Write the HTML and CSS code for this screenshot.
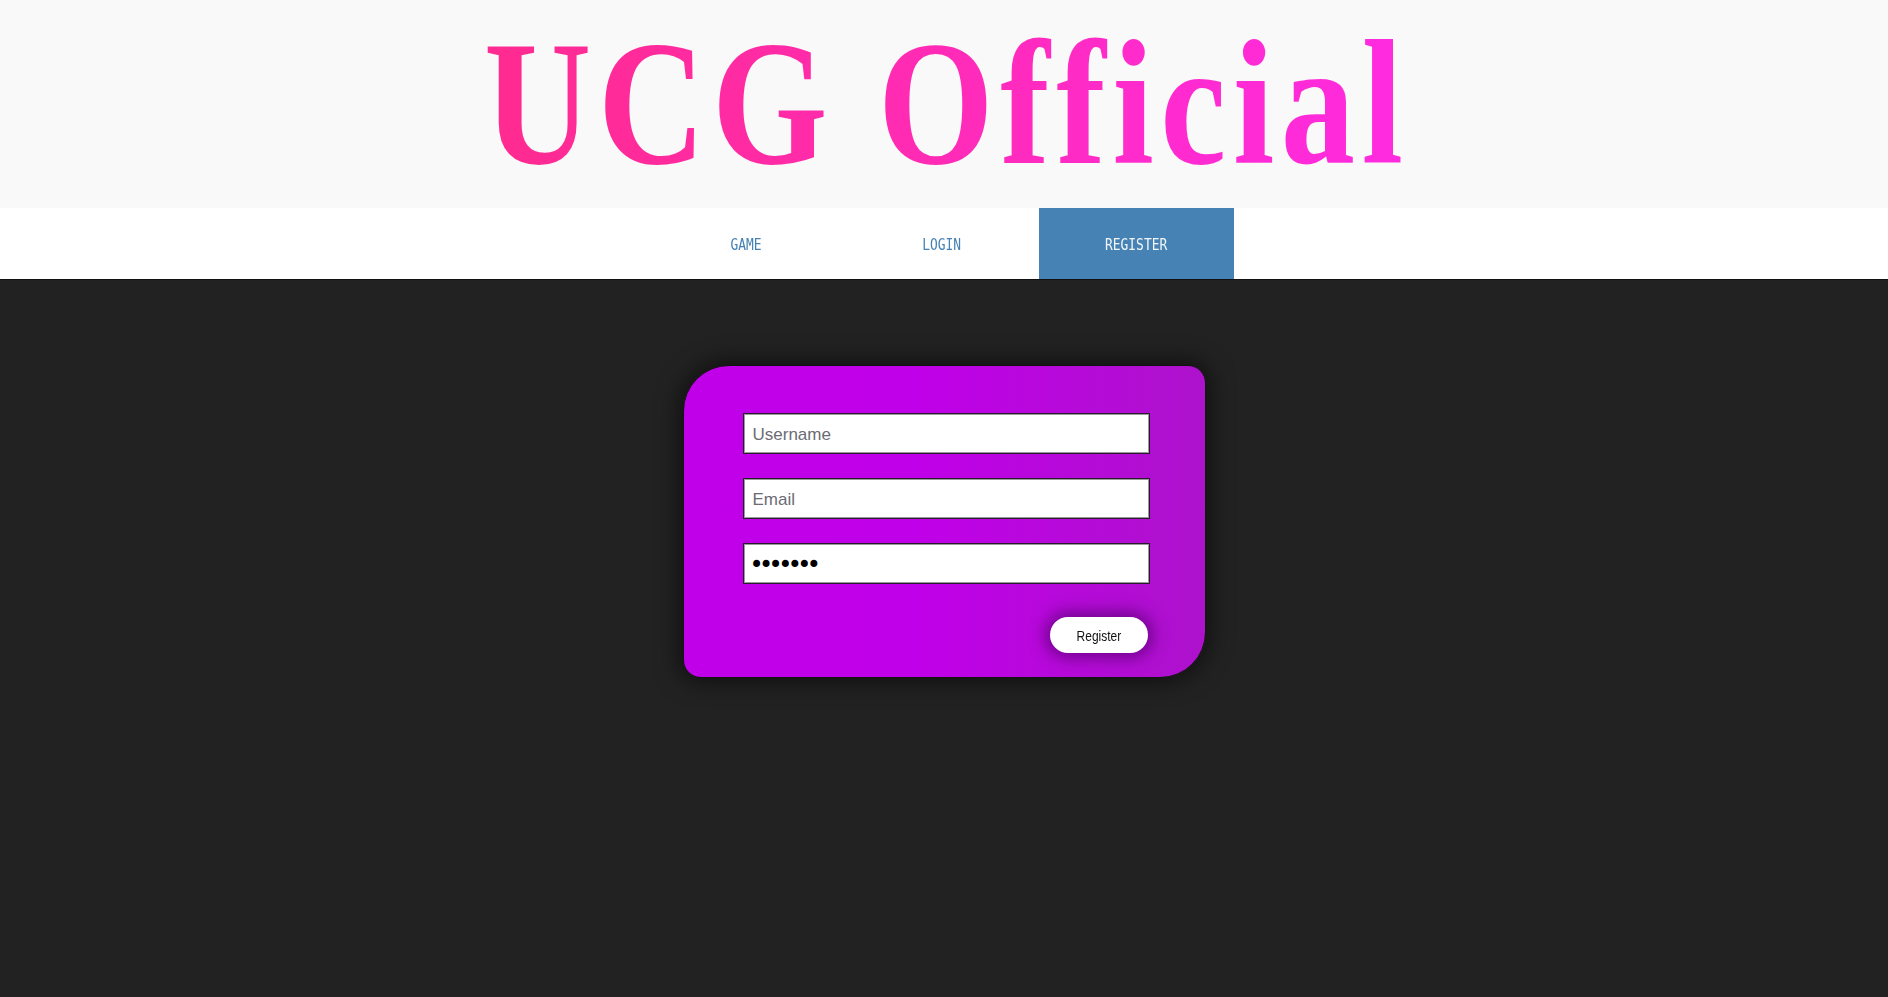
FILE: index.html
```html
<!DOCTYPE html>
<html lang="en">
<head>
<meta charset="utf-8">
<title>UCG Official - Register</title>
<link rel="stylesheet" href="styles.css">
</head>
<body>
<header class="banner">
  <h1 class="title"><span class="title-text">UCG Official</span></h1>
</header>
<nav class="menu">
  <ul class="menu-list">
    <li class="menu-item"><a class="menu-link" href="#"><span class="menu-label">GAME</span></a></li>
    <li class="menu-item"><a class="menu-link" href="#"><span class="menu-label">LOGIN</span></a></li>
    <li class="menu-item menu-item-active"><a class="menu-link" href="#"><span class="menu-label">REGISTER</span></a></li>
  </ul>
</nav>
<main class="content">
  <form class="card" onsubmit="return false">
    <input class="field" type="text" placeholder="Username">
    <input class="field" type="email" placeholder="Email">
    <input class="field field-password" type="password" value="1234567">
    <button class="submit" type="submit"><span class="submit-label">Register</span></button>
  </form>
</main>
</body>
</html>
```
FILE: styles.css
```css
html, body {
  margin: 0;
  padding: 0;
}

body {
  background: #222222;
  min-height: 100vh;
  font-family: "Liberation Sans", Arial, sans-serif;
}

.banner {
  height: 208px;
  background: #f9f9f9;
  box-sizing: border-box;
  padding-top: 13px;
  text-align: center;
  overflow: hidden;
}

.title {
  margin: 0;
  font-family: "Liberation Serif", "Times New Roman", serif;
  font-weight: bold;
  font-size: 179px;
  line-height: 179px;
}

.title-text {
  display: inline-block;
  letter-spacing: 8px;
  padding-left: 8px;
  transform: scaleX(0.83);
  transform-origin: center;
  background: linear-gradient(90deg, #ff2b8f 0%, #ff2ba8 35%, #ff2bd0 75%, #ff2be0 100%);
  -webkit-background-clip: text;
  background-clip: text;
  color: transparent;
}

.menu {
  height: 71px;
  background: #ffffff;
  border-bottom: 1px solid #111111;
}

.menu-list {
  list-style: none;
  margin: 0;
  padding: 0 5px 0 0;
  display: flex;
  justify-content: center;
  height: 100%;
}

.menu-item {
  width: 195px;
  height: 100%;
}

.menu-link {
  display: flex;
  align-items: center;
  justify-content: center;
  box-sizing: border-box;
  padding-top: 3px;
  height: 100%;
  text-decoration: none;
  color: #4682b4;
  font-family: "DejaVu Sans Mono", "Liberation Mono", monospace;
  font-size: 15px;
}

.menu-label {
  display: inline-block;
  transform: scaleX(0.86);
}

.menu-item-active .menu-link {
  background: #4682b4;
  color: #f2f6fa;
}

.content {
  padding-top: 85px;
  display: flex;
  justify-content: center;
}

.card {
  width: 523px;
  box-sizing: border-box;
  display: flex;
  flex-direction: column;
  padding: 47px 55px 24px 59px;
  border: 1px solid #121212;
  border-radius: 46px 18px 46px 18px;
  background: linear-gradient(90deg, #c100ea 0%, #c000e8 45%, #b60ad9 75%, #ad12cc 100%);
  box-shadow: 0 0 22px 5px rgba(0, 0, 0, 0.5);
}

.field {
  display: block;
  box-sizing: border-box;
  height: 41px;
  margin: 0 0 24px 0;
  padding: 3px 9px 0;
  border: 1px solid #2a1a2e;
  border-radius: 0;
  box-shadow: inset 0 0 0 1px #9a9a9a;
  background: #ffffff;
  font-family: "Liberation Sans", Arial, sans-serif;
  font-size: 17px;
  color: #000000;
  outline: none;
}

.field::placeholder {
  color: #6b6b73;
}

.field-password {
  margin-bottom: 33px;
  padding: 2px 9px 0 6px;
  font-family: "DejaVu Sans", sans-serif;
  font-size: 24px;
  letter-spacing: -4.6px;
}

.submit {
  align-self: flex-end;
  margin-right: 2px;
  width: 98px;
  height: 36px;
  border: none;
  border-radius: 18px;
  background: #ffffff;
  box-shadow: 0 0 16px 5px rgba(90, 0, 115, 0.75);
  font-family: "Liberation Sans", Arial, sans-serif;
  font-size: 15px;
  color: #111111;
  cursor: pointer;
  padding: 0;
}

.submit-label {
  display: inline-block;
  transform: scaleX(0.8);
}
```
